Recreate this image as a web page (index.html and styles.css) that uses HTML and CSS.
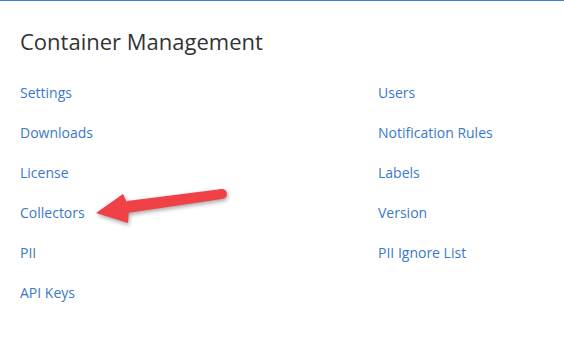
FILE: index.html
```html
<!DOCTYPE html>
<html lang="en">
  <head>
    <meta charset="UTF-8" />
    <meta name="viewport" content="width=device-width, initial-scale=1.0" />
    <title>Container Management</title>
    <link rel="stylesheet" href="styles.css">
  </head>
  <body>
    <div class="page">
      <h1>Container Management</h1>
      <div class="menu">
        <ul class="menu-col">
          <li><a href="#">Settings</a></li>
          <li><a href="#">Downloads</a></li>
          <li><a href="#">License</a></li>
          <li><a href="#">Collectors</a></li>
          <li><a href="#">PII</a></li>
          <li><a href="#">API Keys</a></li>
        </ul>
        <ul class="menu-col">
          <li><a href="#">Users</a></li>
          <li><a href="#">Notification Rules</a></li>
          <li><a href="#">Labels</a></li>
          <li><a href="#">Version</a></li>
          <li><a href="#">PII Ignore List</a></li>
        </ul>
      </div>

      <!-- annotation arrow pointing at Collectors -->
      <svg class="arrow" width="150" height="50" viewBox="0 0 150 50">
        <polygon points="37,21 132,9 132,19 37,33" fill="#ef4146" />
        <circle cx="132" cy="14" r="5" fill="#ef4146" />
        <polygon points="6,33 33,14 39,27 38,43" fill="#ef4146" />
      </svg>
    </div>
  </body>
</html>
```

FILE: styles.css
```css
body {
  margin: 0;
  background: #fff;
  font-family: "Open Sans", "Liberation Sans", sans-serif;
}
.page {
  position: relative;
  border-top: 1px solid #3b7ddd;
  padding: 0 20px;
  height: 355px;
}
h1 {
  margin: 25px 0 17px;
  font-size: 22px;
  line-height: 30px;
  font-weight: 400;
  color: #333;
}
.menu {
  display: flex;
}
.menu-col {
  list-style: none;
  margin: 0;
  padding: 0;
}
.menu-col:first-child {
  width: 358px;
}
.menu-col li {
  height: 40px;
  padding: 10px 0;
  box-sizing: border-box;
  font-size: 14px;
  line-height: 20px;
}
.menu-col a {
  color: #3a78c9;
  text-decoration: none;
}
.arrow {
  position: absolute;
  left: 90px;
  top: 179px;
  filter: drop-shadow(1px 2px 2px rgba(0, 0, 0, 0.35));
}
```
